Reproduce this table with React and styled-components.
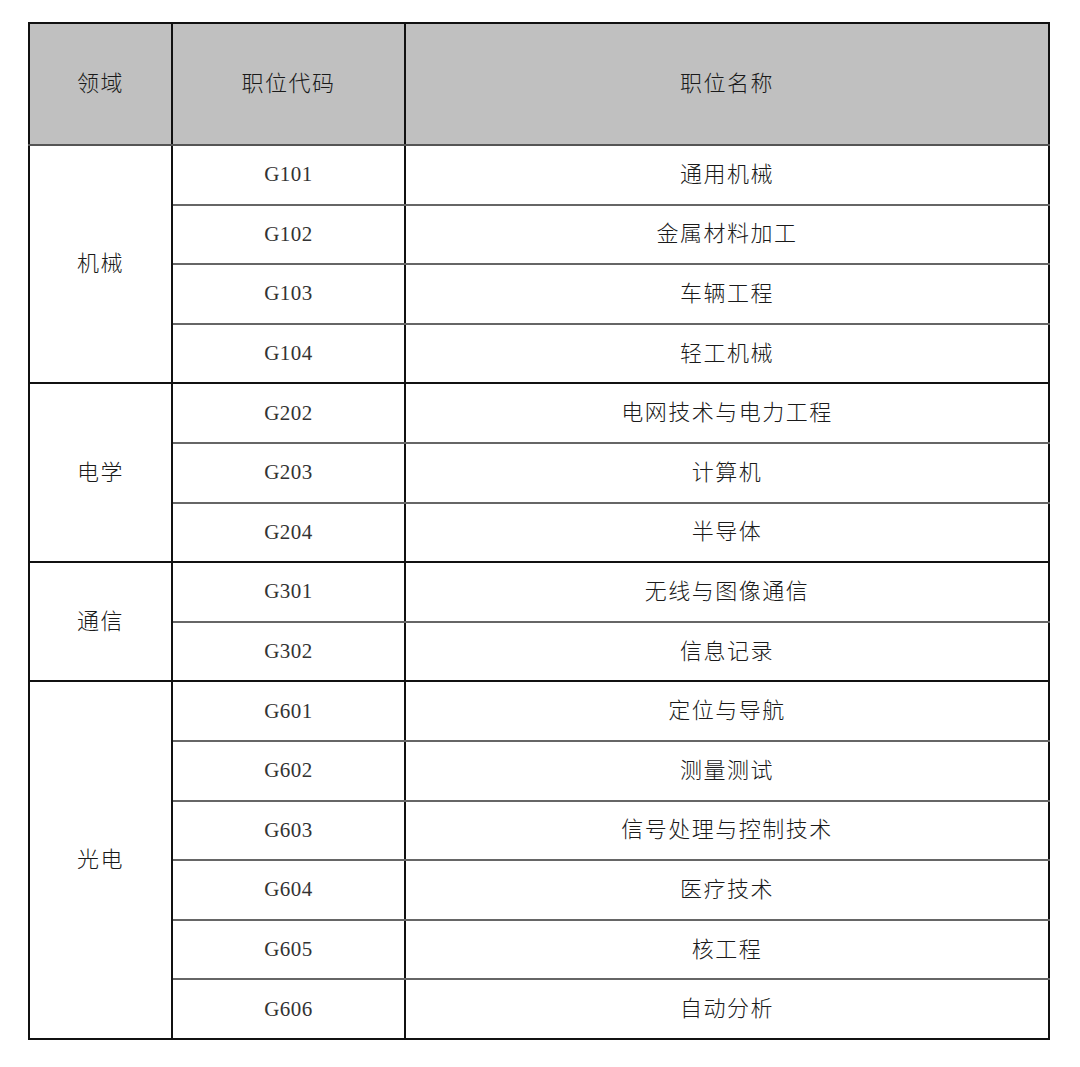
import React from "react";
import styled, { createGlobalStyle } from "styled-components";

const GlobalStyle = createGlobalStyle`
  html, body {
    margin: 0;
    padding: 0;
    background: #ffffff;
  }
`;

const Page = styled.div`
  padding: 22px 0 0 28px;
  width: 1080px;
  height: 1067px;
  box-sizing: border-box;
`;

const Table = styled.table`
  width: 1022px;
  border-collapse: collapse;
  table-layout: fixed;
  font-family: "Noto Sans CJK SC", "Liberation Serif", serif;
  color: #1a1a1a;
  border: 2px solid #111;
`;

const HeadRow = styled.tr`
  height: 122px;
`;

const HeadCell = styled.th`
  background: #c0c0c0;
  font-weight: 300;
  font-size: 22px;
  line-height: 22px;
  letter-spacing: 1.5px;
  text-align: center;
  border-left: 2px solid #111;
  border-right: 2px solid #111;
  border-bottom: 2px solid #555;
  padding: 0 0 6px;
  box-sizing: border-box;
`;

const Cell = styled.td`
  padding: ${(p) => (p.$code ? "0 0 1px" : "0 0 6px")};
  box-sizing: border-box;
  text-align: center;
  line-height: 22px;
  font-size: ${(p) => (p.$code ? "21px" : "22px")};
  font-family: ${(p) =>
    p.$code
      ? `"Liberation Serif", "Noto Sans CJK SC", serif`
      : `"Noto Sans CJK SC", sans-serif`};
  font-weight: 300;
  color: ${(p) => (p.$code ? "#333" : "#1a1a1a")};
  letter-spacing: ${(p) => (p.$code ? "0.5px" : "1.5px")};
  border-left: 2px solid #111;
  border-right: 2px solid #111;
  border-bottom: ${(p) => (p.$groupEnd ? "2px solid #111" : "2px solid #666")};
`;

const Row = styled.tr`
  height: 59.6px;
`;

const groups = [
  {
    name: "机械",
    rows: [
      ["G101", "通用机械"],
      ["G102", "金属材料加工"],
      ["G103", "车辆工程"],
      ["G104", "轻工机械"],
    ],
  },
  {
    name: "电学",
    rows: [
      ["G202", "电网技术与电力工程"],
      ["G203", "计算机"],
      ["G204", "半导体"],
    ],
  },
  {
    name: "通信",
    rows: [
      ["G301", "无线与图像通信"],
      ["G302", "信息记录"],
    ],
  },
  {
    name: "光电",
    rows: [
      ["G601", "定位与导航"],
      ["G602", "测量测试"],
      ["G603", "信号处理与控制技术"],
      ["G604", "医疗技术"],
      ["G605", "核工程"],
      ["G606", "自动分析"],
    ],
  },
];

export default function App() {
  return (
    <Page>
      <GlobalStyle />
      <Table>
        <colgroup>
          <col style={{ width: 143 }} />
          <col style={{ width: 233 }} />
          <col />
        </colgroup>
        <thead>
          <HeadRow>
            <HeadCell>领域</HeadCell>
            <HeadCell>职位代码</HeadCell>
            <HeadCell>职位名称</HeadCell>
          </HeadRow>
        </thead>
        <tbody>
          {groups.map((g) =>
            g.rows.map(([code, title], i) => {
              const last = i === g.rows.length - 1;
              return (
                <Row key={code}>
                  {i === 0 && (
                    <Cell rowSpan={g.rows.length} $groupEnd>
                      {g.name}
                    </Cell>
                  )}
                  <Cell $code $groupEnd={last}>
                    {code}
                  </Cell>
                  <Cell $groupEnd={last}>{title}</Cell>
                </Row>
              );
            })
          )}
        </tbody>
      </Table>
    </Page>
  );
}
